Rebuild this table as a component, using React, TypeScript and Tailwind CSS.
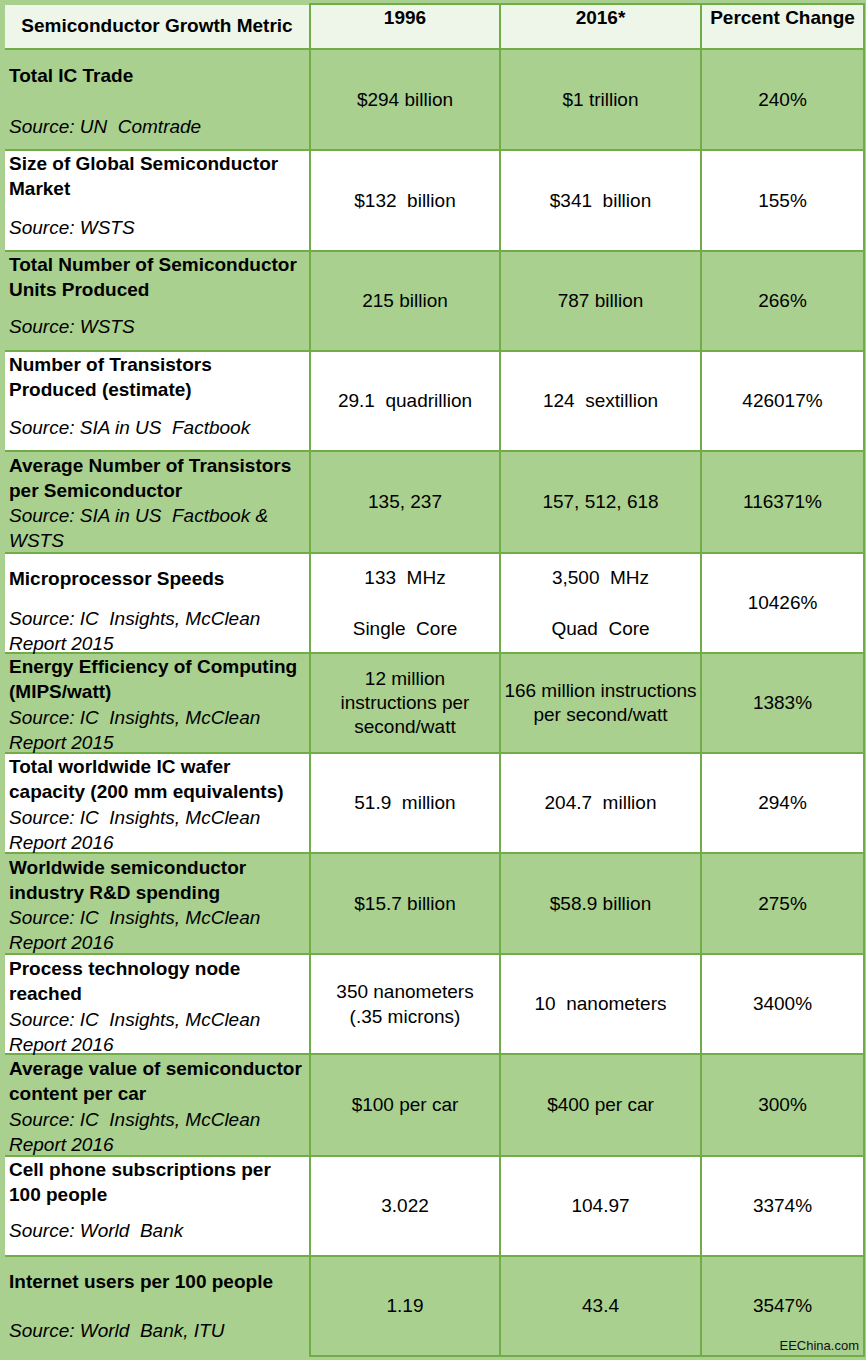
const GREEN = "bg-[#a9d08e]";
const WHITE = "bg-white";

type Row = {
  title: string[];
  source: string[];
  pt: string;
  mt: string;
  h: string;
  v1996: string[];
  v2016: string[];
  change: string;
  tight?: boolean;
};

const rows: Row[] = [
  {
    title: ["Total IC Trade"],
    source: ["Source: UN  Comtrade"],
    pt: "pt-[13px]",
    mt: "mt-[26px]",
    h: "h-[99px]",
    v1996: ["$294 billion"],
    v2016: ["$1 trillion"],
    change: "240%",
  },
  {
    title: ["Size of Global Semiconductor", "Market"],
    source: ["Source: WSTS"],
    pt: "pt-0",
    mt: "mt-[14px]",
    h: "h-[99px]",
    v1996: ["$132  billion"],
    v2016: ["$341  billion"],
    change: "155%",
  },
  {
    title: ["Total Number of Semiconductor", "Units Produced"],
    source: ["Source: WSTS"],
    pt: "pt-0",
    mt: "mt-[12px]",
    h: "h-[98px]",
    v1996: ["215 billion"],
    v2016: ["787 billion"],
    change: "266%",
  },
  {
    title: ["Number of Transistors", "Produced (estimate)"],
    source: ["Source: SIA in US  Factbook"],
    pt: "pt-0",
    mt: "mt-[13px]",
    h: "h-[98px]",
    v1996: ["29.1  quadrillion"],
    v2016: ["124  sextillion"],
    change: "426017%",
  },
  {
    title: ["Average Number of Transistors", "per Semiconductor"],
    source: ["Source: SIA in US  Factbook &", "WSTS"],
    pt: "pt-[1px]",
    mt: "mt-0",
    h: "h-[100px]",
    v1996: ["135, 237"],
    v2016: ["157, 512, 618"],
    change: "116371%",
  },
  {
    title: ["Microprocessor Speeds"],
    source: ["Source: IC  Insights, McClean", "Report 2015"],
    pt: "pt-[12px]",
    mt: "mt-[15px]",
    h: "h-[98px]",
    v1996: ["133  MHz", " ", "Single  Core"],
    v2016: ["3,500  MHz", " ", "Quad  Core"],
    change: "10426%",
  },
  {
    title: ["Energy Efficiency of Computing", "(MIPS/watt)"],
    source: ["Source: IC  Insights, McClean", "Report 2015"],
    pt: "pt-0",
    mt: "mt-[1px]",
    h: "h-[98px]",
    v1996: ["12 million", "instructions per", "second/watt"],
    v2016: ["166 million instructions", "per second/watt"],
    change: "1383%",
    tight: true,
  },
  {
    title: ["Total worldwide IC wafer", "capacity (200 mm equivalents)"],
    source: ["Source: IC  Insights, McClean", "Report 2016"],
    pt: "pt-0",
    mt: "mt-[1px]",
    h: "h-[98px]",
    v1996: ["51.9  million"],
    v2016: ["204.7  million"],
    change: "294%",
  },
  {
    title: ["Worldwide semiconductor", "industry R&D spending"],
    source: ["Source: IC  Insights, McClean", "Report 2016"],
    pt: "pt-[1px]",
    mt: "mt-0",
    h: "h-[99px]",
    v1996: ["$15.7 billion"],
    v2016: ["$58.9 billion"],
    change: "275%",
  },
  {
    title: ["Process technology node", "reached"],
    source: ["Source: IC  Insights, McClean", "Report 2016"],
    pt: "pt-[1px]",
    mt: "mt-[1px]",
    h: "h-[98px]",
    v1996: ["350 nanometers", "(.35 microns)"],
    v2016: ["10  nanometers"],
    change: "3400%",
  },
  {
    title: ["Average value of semiconductor", "content per car"],
    source: ["Source: IC  Insights, McClean", "Report 2016"],
    pt: "pt-[1px]",
    mt: "mt-[1px]",
    h: "h-[100px]",
    v1996: ["$100 per car"],
    v2016: ["$400 per car"],
    change: "300%",
  },
  {
    title: ["Cell phone subscriptions per", "100 people"],
    source: ["Source: World  Bank"],
    pt: "pt-0",
    mt: "mt-[11px]",
    h: "h-[98px]",
    v1996: ["3.022"],
    v2016: ["104.97"],
    change: "3374%",
  },
  {
    title: ["Internet users per 100 people"],
    source: ["Source: World  Bank, ITU"],
    pt: "pt-[12px]",
    mt: "mt-[24px]",
    h: "h-[98px]",
    v1996: ["1.19"],
    v2016: ["43.4"],
    change: "3547%",
  },
];

function Lines({ lines, tight }: { lines: string[]; tight?: boolean }) {
  return (
    <div className={`text-center ${tight ? "leading-[24px]" : "leading-[25.5px]"}`}>
      {lines.map((l, i) => (
        <div key={i} className="whitespace-pre">
          {l}
        </div>
      ))}
    </div>
  );
}

function ValueCell({
  lines,
  bg,
  tight,
  extra,
}: {
  lines: string[];
  bg: string;
  tight?: boolean;
  extra?: React.ReactNode;
}) {
  return (
    <div className={`${bg} relative flex items-center justify-center`}>
      <Lines lines={lines} tight={tight} />
      {extra}
    </div>
  );
}

export default function App() {
  return (
    <div
      className="w-[866px] h-[1360px] bg-[#a9d08e] pl-[5px] pt-[3px] text-[19px] text-black"
      style={{ fontFamily: '"Liberation Sans", Arial, sans-serif' }}
    >
      <div className="h-[2px] ml-[304px] w-[556px] bg-[#70ad47]" />
      <div className="grid grid-cols-[304px_188px_199px_161px] gap-[2px] bg-[#70ad47] pr-[2px] w-[860px]">
        <div className="bg-[#eef6e9] h-[43px] flex items-center justify-center font-bold">
          Semiconductor Growth Metric
        </div>
        <div className="bg-[#eef6e9] text-center font-bold leading-[25px]">1996</div>
        <div className="bg-[#eef6e9] text-center font-bold leading-[25px]">2016*</div>
        <div className="bg-[#eef6e9] text-center font-bold leading-[25px]">Percent Change</div>

        {rows.map((r, i) => {
          const bg = i % 2 === 0 ? GREEN : WHITE;
          const last = i === rows.length - 1;
          return [
            <div key={`t${i}`} className={`${bg} ${r.h} ${r.pt} pl-[4px] leading-[25px]`}>
              <div className="font-bold">
                {r.title.map((t, j) => (
                  <div key={j} className="whitespace-pre">
                    {t}
                  </div>
                ))}
              </div>
              <div className={`${r.mt} italic`}>
                {r.source.map((s, j) => (
                  <div key={j} className="whitespace-pre">
                    {s}
                  </div>
                ))}
              </div>
            </div>,
            <ValueCell key={`a${i}`} lines={r.v1996} bg={bg} tight={r.tight} />,
            <ValueCell key={`b${i}`} lines={r.v2016} bg={bg} tight={r.tight} />,
            <ValueCell
              key={`c${i}`}
              lines={[r.change]}
              bg={bg}
              extra={
                last ? (
                  <span className="absolute right-[4px] bottom-[1px] text-[13px] leading-[16px] text-[#111]">
                    EEChina.com
                  </span>
                ) : null
              }
            />,
          ];
        })}
      </div>
      <div className="h-[2px] ml-[304px] w-[556px] bg-[#70ad47]" />
    </div>
  );
}
